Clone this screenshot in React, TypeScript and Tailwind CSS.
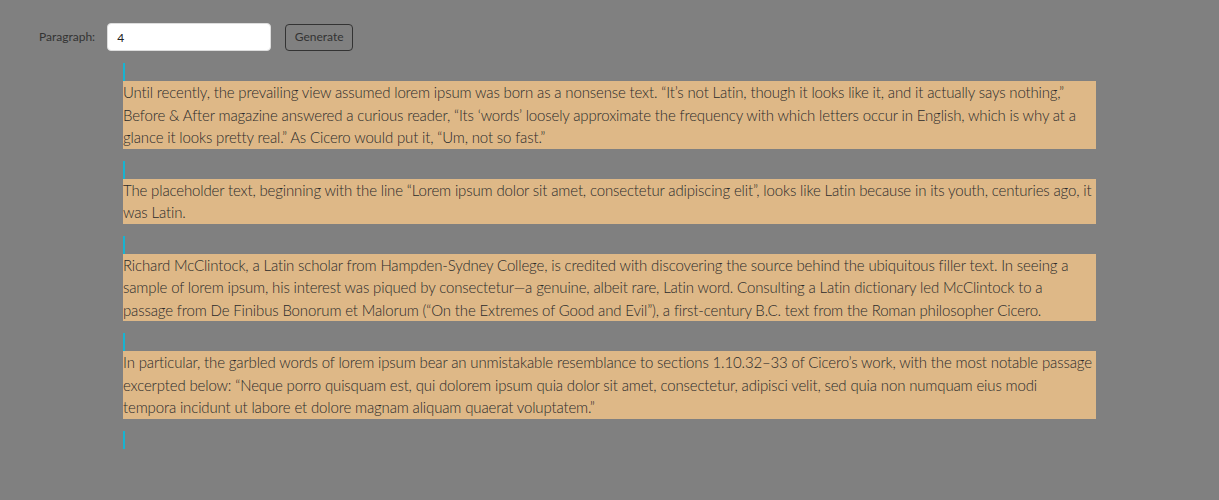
import React, { useState } from 'react'

// each paragraph split into the lines it shows at this width
const paragraphs = [
  [
    'Until recently, the prevailing view assumed lorem ipsum was born as a nonsense text. “It’s not Latin, though it looks like it, and it actually says nothing,”',
    'Before & After magazine answered a curious reader, “Its ‘words’ loosely approximate the frequency with which letters occur in English, which is why at a',
    'glance it looks pretty real.” As Cicero would put it, “Um, not so fast.”',
  ],
  [
    'The placeholder text, beginning with the line “Lorem ipsum dolor sit amet, consectetur adipiscing elit”, looks like Latin because in its youth, centuries ago, it',
    'was Latin.',
  ],
  [
    'Richard McClintock, a Latin scholar from Hampden-Sydney College, is credited with discovering the source behind the ubiquitous filler text. In seeing a',
    'sample of lorem ipsum, his interest was piqued by consectetur—a genuine, albeit rare, Latin word. Consulting a Latin dictionary led McClintock to a',
    'passage from De Finibus Bonorum et Malorum (“On the Extremes of Good and Evil”), a first-century B.C. text from the Roman philosopher Cicero.',
  ],
  [
    'In particular, the garbled words of lorem ipsum bear an unmistakable resemblance to sections 1.10.32–33 of Cicero’s work, with the most notable passage',
    'excerpted below: “Neque porro quisquam est, qui dolorem ipsum quia dolor sit amet, consectetur, adipisci velit, sed quia non numquam eius modi',
    'tempora incidunt ut labore et dolore magnam aliquam quaerat voluptatem.”',
  ],
]

function Caret() {
  return <div className="mt-3 h-[18px] w-[2px] bg-[#17b4d2]" />
}

export default function App() {
  const [count, setCount] = useState('4')

  return (
    <div className="min-h-[500px] w-full bg-[#808080] font-['Lato','Noto_Sans',sans-serif] text-[#2b2b2b]">
      {/* top controls */}
      <div className="flex items-center pl-[39px] pt-[23px]">
        <label className="text-[12px] text-[#333]">Paragraph:</label>
        <input
          value={count}
          onChange={(e) => setCount(e.target.value)}
          className="ml-[12px] h-[28px] w-[164px] rounded-[4px] border border-[#ddd] bg-white px-[9px] text-[12px] text-[#222] outline-none"
        />
        <button className="ml-[14px] h-[27px] w-[68px] rounded-[4px] border border-[#333] bg-transparent text-[12px] text-[#333]">
          Generate
        </button>
      </div>

      {/* generated paragraphs */}
      <div className="ml-[123px] w-[973px] pb-[50px]">
        {paragraphs.map((lines, i) => (
          <div key={i}>
            <Caret />
            <p className="whitespace-nowrap bg-[#deb887] text-[15px] font-light leading-[22.5px] tracking-[-0.15px]">
              {lines.map((l, j) => (
                <React.Fragment key={j}>
                  {l}
                  {j < lines.length - 1 && <br />}
                </React.Fragment>
              ))}
            </p>
          </div>
        ))}
        <Caret />
      </div>
    </div>
  )
}
